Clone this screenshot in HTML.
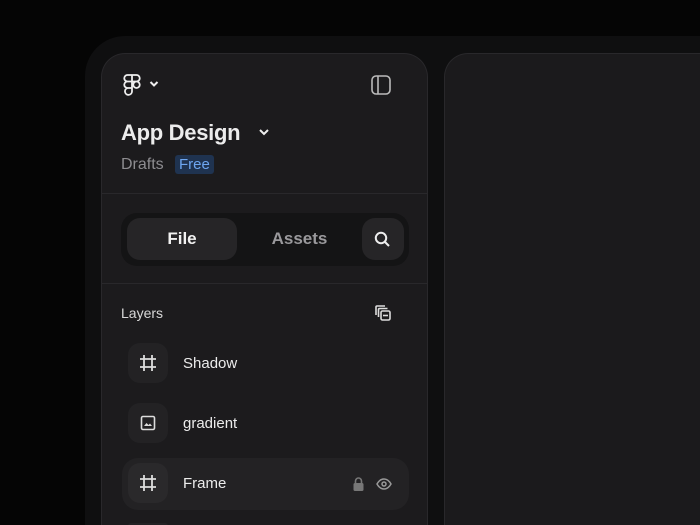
<!DOCTYPE html><html><head><style>
*{margin:0;padding:0;box-sizing:border-box}
html,body{width:700px;height:525px;overflow:hidden}
body{background:#050505;position:relative;font-family:"Liberation Sans",sans-serif}
.outer{position:absolute;left:85px;top:36px;width:615px;height:489px;background:#0f0f10;border-radius:40px 0 0 0}
.side{position:absolute;left:101px;top:53px;width:327px;height:472px;background:#1c1b1d;border-radius:24px 24px 0 0;border:1px solid #29282b;border-bottom:none;overflow:hidden}
.main{position:absolute;left:444px;top:53px;width:256px;height:472px;background:#1b1a1c;border-radius:24px 0 0 0;border:1px solid #29282b;border-bottom:none;border-right:none}
.abs{position:absolute}
.t{color:#ececec}
.hr{position:absolute;left:0;width:100%;height:1px;background:#29282b}
</style></head><body>
<div class="outer"></div>
<div class="main"></div>
<div class="side">
 <svg class="abs" style="left:21px;top:20px" width="18" height="23" viewBox="0 0 18 23" fill="none" stroke="#eee" stroke-width="1.8"><path d="M4.5 1H9v6.5H4.5a3.25 3.25 0 010-6.5zM9 1h4.5a3.25 3.25 0 010 6.5H9zM4.5 7.5H9V14H4.5a3.25 3.25 0 010-6.5zM13.5 7.5a3.25 3.25 0 110 6.5 3.25 3.25 0 010-6.5zM4.5 14H9v3.5A3.5 3.5 0 114.5 14z"/></svg>
 <svg class="abs" style="left:47px;top:26px" width="10" height="8" viewBox="0 0 10 8" fill="none" stroke="#eee" stroke-width="2"><path d="M1.5 2l3.5 3.5L8.5 2"/></svg>
 <svg class="abs" style="left:269px;top:21px" width="20" height="20" viewBox="0 0 20 20" fill="none" stroke="#bbb" stroke-width="1.6"><rect x="1" y="1" width="18" height="18" rx="4"/><path d="M7 1v18"/></svg>
 <div class="abs t" style="left:19px;top:66px;font-size:22px;font-weight:bold;letter-spacing:-0.3px">App Design</div>
 <svg class="abs" style="left:156px;top:74px" width="12" height="9" viewBox="0 0 12 9" fill="none" stroke="#eee" stroke-width="2"><path d="M2 2l4 4 4-4"/></svg>
 <div class="abs" style="left:19px;top:102px;font-size:16px;color:#8d8c90">Drafts</div>
 <div class="abs" style="left:73px;top:101px;padding:1px 4px;background:#1f3350;color:#6ea6f0;font-size:15px;border-radius:3px">Free</div>
 <div class="hr" style="top:139px"></div>
 <div class="abs" style="left:19px;top:159px;width:288px;height:53px;background:#141415;border-radius:16px"></div>
 <div class="abs" style="left:25px;top:164px;width:110px;height:42px;background:#262527;border-radius:13px;color:#f2f2f2;font-weight:bold;font-size:17px;text-align:center;line-height:42px">File</div>
 <div class="abs" style="left:135px;top:164px;width:125px;height:42px;color:#9a999c;font-weight:bold;font-size:17px;text-align:center;line-height:42px">Assets</div>
 <div class="abs" style="left:260px;top:164px;width:42px;height:42px;background:#262527;border-radius:13px"></div>
 <svg class="abs" style="left:272px;top:177px" width="17" height="17" viewBox="0 0 17 17" fill="none" stroke="#eee" stroke-width="2"><circle cx="7" cy="7" r="5.2"/><path d="M11 11l4 4"/></svg>
 <div class="hr" style="top:229px"></div>
 <div class="abs t" style="left:19px;top:251px;font-size:14px;color:#d8d8d8">Layers</div>
 <svg class="abs" style="left:272px;top:250px" width="18" height="18" viewBox="0 0 18 18" fill="none" stroke="#ddd" stroke-width="1.6"><path d="M2 11V3a1 1 0 011-1h8M4.5 13V5.5a1 1 0 011-1h8"/><rect x="7" y="7" width="9" height="9" rx="1.5"/><path d="M9 11.5h5"/></svg>
 <div class="abs" style="left:20px;top:404px;width:287px;height:52px;background:#232224;border-radius:16px"></div>
 <div class="abs" style="left:26px;top:289px;width:40px;height:40px;background:#232224;border-radius:12px"></div>
 <div class="abs" style="left:26px;top:349px;width:40px;height:40px;background:#232224;border-radius:12px"></div>
 <div class="abs" style="left:26px;top:409px;width:40px;height:40px;background:#2a292b;border-radius:12px"></div>
 <div class="abs" style="left:26px;top:469px;width:40px;height:3px;background:#232224;border-radius:12px 12px 0 0"></div>
 <svg class="abs" style="left:37px;top:300px" width="18" height="18" viewBox="0 0 18 18" fill="none" stroke="#ddd" stroke-width="1.8"><path d="M5 1v16M13 1v16M1 5h16M1 13h16"/></svg>
 <svg class="abs" style="left:38px;top:361px" width="16" height="16" viewBox="0 0 16 16" fill="none" stroke="#ddd" stroke-width="1.6"><rect x="1.5" y="1.5" width="13" height="13" rx="1.5"/><path d="M4 11l2.5-3 2 2 1.5-1.5L12 11z" fill="#ddd" stroke="none"/></svg>
 <svg class="abs" style="left:37px;top:420px" width="18" height="18" viewBox="0 0 18 18" fill="none" stroke="#ddd" stroke-width="1.8"><path d="M5 1v16M13 1v16M1 5h16M1 13h16"/></svg>
 <div class="abs t" style="left:81px;top:301px;font-size:15px">Shadow</div>
 <div class="abs t" style="left:81px;top:361px;font-size:15px">gradient</div>
 <div class="abs t" style="left:81px;top:421px;font-size:15px">Frame</div>
 <svg class="abs" style="left:251px;top:423px" width="11" height="14" viewBox="0 0 11 14"><path d="M2.5 6V4a3 3 0 016 0V6" fill="none" stroke="#777" stroke-width="1.6"/><rect x="0.5" y="6" width="10" height="8" rx="1.5" fill="#777"/></svg>
 <svg class="abs" style="left:274px;top:424px" width="16" height="12" viewBox="0 0 16 12" fill="none" stroke="#999" stroke-width="1.5"><path d="M1 6c2-3.5 4.5-5 7-5s5 1.5 7 5c-2 3.5-4.5 5-7 5S3 9.5 1 6z"/><circle cx="8" cy="6" r="2"/></svg>
</div>
</body></html>
